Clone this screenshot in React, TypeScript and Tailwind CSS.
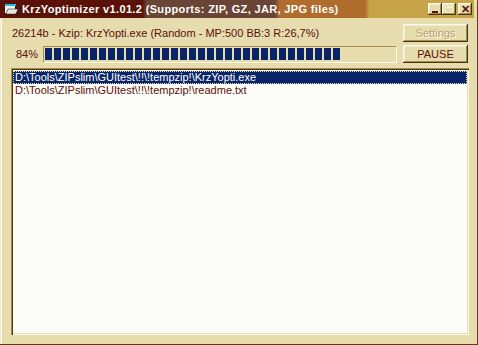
import React from "react";

const rows = [
  "D:\\Tools\\ZIPslim\\GUItest\\!!\\!tempzip!\\KrzYopti.exe",
  "D:\\Tools\\ZIPslim\\GUItest\\!!\\!tempzip!\\readme.txt",
];

const raised =
  "shadow-[inset_-1px_-1px_#4a3410,inset_1px_1px_#fffbe8,inset_-2px_-2px_#a88c50,inset_2px_2px_#f2eacc]";

function FolderIcon() {
  return (
    <svg width="14" height="12" viewBox="0 0 14 12" className="shrink-0">
      <rect x="0" y="1" width="11" height="2" fill="#20c0e0" />
      <path d="M1 3 H11 V5 H13 V11 H3 Z" fill="#101010" />
      <path d="M0 3 H10 V10 H0 Z" fill="#f8f8f0" />
      <path d="M3 6 H13 L11 11 H1 Z" fill="#e8e8e0" stroke="#303030" strokeWidth="0.6" />
    </svg>
  );
}

function TitleButton({ children }: { children: React.ReactNode }) {
  return (
    <div className={`w-[14px] h-[12px] bg-[#e6dcae] flex items-center justify-center ${raised}`}>
      {children}
    </div>
  );
}

function Button({ label, disabled }: { label: string; disabled?: boolean }) {
  return (
    <div
      className={`w-[65px] h-[18px] bg-[#e6dcae] flex items-center justify-center text-[11px] ${raised} ${
        disabled ? "text-[#b8a070] [text-shadow:1px_1px_#fffbe8]" : "text-[#5c1008]"
      }`}
    >
      {label}
    </div>
  );
}

export default function App() {
  const blocks = Array.from({ length: 33 });
  return (
    <div
      className="w-[478px] h-[345px] bg-[#e6dcae] flex flex-col overflow-hidden shadow-[inset_-1px_-1px_#5a4018,inset_1px_1px_#f4ecd0,inset_2px_0_#fffbe8]"
      style={{ fontFamily: '"Liberation Sans", Arial, sans-serif' }}
    >
      {/* title bar */}
      <div className="h-[18px] mr-[4px] flex items-center bg-[linear-gradient(90deg,#5a1208_0%,#5a1208_30%,#6a4434_31%,#6a4434_58%,#b06c2c_59%,#b06c2c_77%,#c8a448_78%,#c8a448_100%)]">
        <div className="pl-[5px] pr-[3px]">
          <FolderIcon />
        </div>
        <span className="text-white font-bold text-[11px] whitespace-nowrap tracking-[0.35px]">
          KrzYoptimizer v1.01.2 (Supports: ZIP, GZ, JAR, JPG files)
        </span>
        <div className="ml-auto flex items-center pr-[2px]">
          <TitleButton>
            <div className="w-[6px] h-[2px] bg-[#5c1008] mt-[5px]" />
          </TitleButton>
          <TitleButton>
            <div className="w-[8px] h-[7px] border border-[#f4ecd0] border-t-2" />
          </TitleButton>
          <div className="w-[2px]" />
          <TitleButton>
            <span className="text-[#5c1008] text-[11px] font-bold leading-none">✕</span>
          </TitleButton>
        </div>
      </div>

      {/* status row */}
      <div className="flex items-center h-[20px] mt-[5px] pl-[12px] pr-[10px]">
        <span className="text-[#5c1008] text-[11px] whitespace-nowrap">
          26214b - Kzip: KrzYopti.exe (Random - MP:500 BB:3 R:26,7%)
        </span>
        <div className="ml-auto">
          <Button label="Settings" disabled />
        </div>
      </div>

      {/* progress row */}
      <div className="flex items-center h-[18px] mt-[2px] pl-[16px] pr-[10px]">
        <span className="text-[#5c1008] text-[11px] w-[27px]">84%</span>
        <div className="w-[354px] h-[17px] border border-[#a88c50] border-b-[#fffbe8] border-r-[#fffbe8] flex items-center px-[1px] gap-[2px]">
          {blocks.map((_, i) => (
            <div key={i} className="w-[7px] h-[12px] bg-[#0a2468]" />
          ))}
        </div>
        <div className="ml-auto">
          <Button label="PAUSE" />
        </div>
      </div>

      {/* list */}
      <div className="flex-1 mt-[5px] mb-[10px] ml-[11px] mr-[9px] bg-[#fcfcf8] shadow-[inset_1px_1px_#a88c50,inset_2px_2px_#4a3410,inset_-1px_-1px_#fffbe8,inset_-2px_-2px_#e6dcae] p-[2px] pt-[3px]">
        {rows.map((r, i) => (
          <div
            key={r}
            className={`h-[13px] leading-[13px] text-[11px] pl-[2px] whitespace-nowrap ${
              i === 0
                ? "bg-[#0a2468] text-white outline-1 outline-dotted outline-[#e6dcae] -outline-offset-1"
                : "text-[#5c1008]"
            }`}
          >
            {r}
          </div>
        ))}
      </div>
    </div>
  );
}
